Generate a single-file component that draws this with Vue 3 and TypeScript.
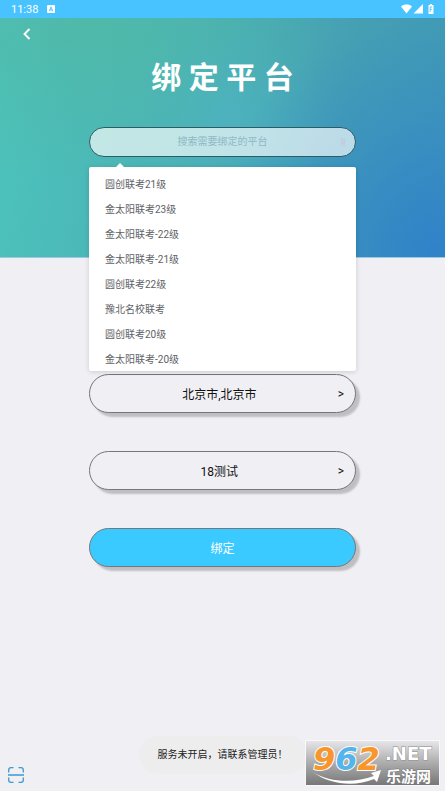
<script setup lang="ts">
import { ref } from 'vue'

const keyword = ref('')
const platforms: string[] = [
  '圆创联考21级',
  '金太阳联考23级',
  '金太阳联考-22级',
  '金太阳联考-21级',
  '圆创联考22级',
  '豫北名校联考',
  '圆创联考20级',
  '金太阳联考-20级',
]
const city = ref('北京市,北京市')
const school = ref('18测试')

function choose(name: string) {
  keyword.value = name
}
</script>

<template>
  <div class="page">
    <div class="status">
      <span class="time">11:38</span>
      <svg class="badge" viewBox="0 0 8 8" aria-hidden="true">
        <rect width="8" height="8" rx="1" fill="#fff" />
        <path d="M2.3 6.2 4 1.9l1.700 4.300M2.900 4.900h2.200" fill="none" stroke="#48c3ff" stroke-width=".9" />
      </svg>
      <svg class="signals" viewBox="0 0 36 12" aria-hidden="true">
        <path d="M1 3.500C4 .900 9 .900 12 3.500L6.500 10.500Z" fill="#fff" />
        <path d="M23 1v9.500h-9.500z" fill="#fff" />
        <path d="M30 1h2v1h1.500v9h-5V2H30z" fill="#fff" />
        <path d="M32.200 4h-2v5M30.200 6.500h1.500" fill="none" stroke="#48c3ff" stroke-width=".9" />
      </svg>
    </div>

    <header class="hero">
      <nav class="nav">
        <button class="back" type="button" aria-label="返回">
          <svg viewBox="0 0 8 12" aria-hidden="true">
            <path d="M6.500 1 1.500 6l5 5" fill="none" stroke="#fff" stroke-width="1.900" />
          </svg>
        </button>
      </nav>
      <h1 class="title">绑 定 平 台</h1>
      <div class="search">
        <input v-model="keyword" class="field" type="text" placeholder="搜索需要绑定的平台" aria-label="搜索需要绑定的平台" />
        <svg class="mark" viewBox="0 0 4 8" aria-hidden="true">
          <path d="M.5.5h3v7h-3zM1 2.500h2M1 4h2M1 5.500h2" fill="none" stroke="#c8bfca" stroke-width=".5" />
        </svg>
        <div class="menu">
          <ul class="options">
            <li v-for="name in platforms" :key="name">
              <button class="option" type="button" @click="choose(name)">{{ name }}</button>
            </li>
          </ul>
        </div>
      </div>
    </header>

    <main class="form">
      <button class="pill" type="button" aria-haspopup="listbox">
        <span class="value">{{ city }}</span><span>&gt;</span>
      </button>
      <button class="pill" type="button" aria-haspopup="listbox">
        <span class="value">{{ school }}</span><span>&gt;</span>
      </button>
      <button class="pill submit" type="button">绑定</button>
    </main>

    <footer class="footer">
      <button class="scan" type="button" aria-label="扫一扫">
        <svg viewBox="0 0 16 16" fill="none" stroke="#3b9bd0" stroke-width="1.300" aria-hidden="true">
          <path d="M.7 5.500V3Q.7.700 3 .700h2.500M10.500.700H13q2.300 0 2.300 2.300v2.500M.7 10.500V13q0 2.300 2.300 2.300h2.500M10.500 15.300H13q2.300 0 2.300-2.300v-2.500M0 8h16" />
        </svg>
      </button>
    </footer>

    <div class="toast" role="status">服务未开启，请联系管理员！</div>

    <svg class="brand" viewBox="0 0 135 46" role="img" aria-label="962.NET 乐游网">
      <defs>
        <linearGradient id="plate" x1="0" y1="0" x2="0" y2="1">
          <stop offset="0" stop-color="#e6e6e8" />
          <stop offset=".5" stop-color="#acacad" />
          <stop offset="1" stop-color="#777778" />
        </linearGradient>
      </defs>
      <rect width="135" height="46" fill="#f8f8fa" />
      <rect x="1" y="1" width="133" height="44" fill="url(#plate)" />
      <path d="M8 32C25 43 50 43 69 36l-3-3 10-3-4 12-3-3C50 47 25 45 8 32Z" fill="#fff" />
      <text class="digits" x="8" y="30"><tspan fill="#f7962c">9</tspan><tspan fill="#55b4ea">6</tspan><tspan fill="#f7962c">2</tspan></text>
      <text class="domain" x="80" y="20">.NET</text>
      <text class="name" x="81" y="42">乐游网</text>
    </svg>
  </div>
</template>

<style>
body {
  margin: 0;
  background: #efeff4;
}
</style>

<style scoped>
.page {
  position: relative;
  display: flex;
  flex-direction: column;
  min-height: 100vh;
  background: #efeff4;
  font-family: Roboto, "Noto Sans CJK SC", sans-serif;
}
button {
  margin: 0;
  padding: 0;
  border: 0;
  background: none;
  font-family: inherit;
}
svg {
  display: block;
}
.status {
  display: flex;
  align-items: center;
  height: 18px;
  padding: 0 9px 0 11px;
  background: #48c3ff;
  color: #fff;
}
.time {
  padding-top: 2px;
  font-size: 11px;
  line-height: 16px;
}
.badge {
  width: 8px;
  height: 8px;
  margin-left: 9px;
}
.signals {
  width: 36px;
  height: 12px;
  margin-left: auto;
}
.hero {
  box-sizing: border-box;
  display: flex;
  flex-direction: column;
  align-items: center;
  height: 240px;
  border-bottom: 1px solid #9cc9e0;
  background:
    radial-gradient(circle at 52% 42%, rgba(80, 182, 202, 0.5), rgba(80, 182, 202, 0.2) 18%, rgba(80, 182, 202, 0) 36%),
    radial-gradient(ellipse at 20% 0%, rgba(80, 184, 165, 0.8), rgba(80, 184, 165, 0) 50%),
    radial-gradient(circle at 100% 100%, rgba(46, 128, 202, 0.95), rgba(50, 136, 200, 0.55) 25%, rgba(60, 148, 190, 0) 48%),
    linear-gradient(100deg, #4dc4bc 0%, #4ab2b6 40%, #459fb3 75%, #4098b6 100%);
}
.nav {
  align-self: stretch;
  display: flex;
  height: 32px;
  padding-left: 17px;
}
.back {
  display: flex;
  align-items: center;
  justify-content: center;
  width: 20px;
  height: 32px;
}
.back svg {
  width: 8px;
  height: 12px;
}
.title {
  margin: 6px 0 0;
  color: #fff;
  font-size: 30px;
  font-weight: 700;
  line-height: 44px;
  white-space: nowrap;
}
.search {
  position: relative;
  width: 60%;
  margin-top: 27px;
}
.field {
  box-sizing: border-box;
  display: block;
  width: 100%;
  height: 30px;
  padding: 0 16px 2px;
  border: 1px solid #2c5c66;
  border-radius: 15px;
  outline: none;
  background: rgba(255, 255, 255, 0.66);
  color: #333;
  font-family: inherit;
  font-size: 10px;
  text-align: center;
}
.field::placeholder {
  color: #8fb9c4;
  opacity: 1;
}
.mark {
  position: absolute;
  top: 11px;
  right: 11px;
  width: 4px;
  height: 8px;
}
.menu {
  position: absolute;
  z-index: 2;
  top: 40px;
  left: 0;
  right: 0;
  border-radius: 2px;
  background: #fff;
  box-shadow: 0 1px 5px rgba(0, 0, 0, 0.15);
}
.menu::before {
  content: "";
  position: absolute;
  top: -4px;
  left: 27px;
  border-right: 4px solid transparent;
  border-bottom: 4px solid #fff;
  border-left: 4px solid transparent;
}
.options {
  max-height: 199px;
  margin: 0;
  padding: 5px 0 0;
  overflow: hidden;
  list-style: none;
}
.option {
  display: block;
  width: 100%;
  height: 25px;
  padding: 0 16px;
  color: #606266;
  font-size: 10px;
  line-height: 25px;
  text-align: left;
}
.form {
  display: flex;
  flex: 1;
  flex-direction: column;
  align-items: center;
  gap: 38px;
  padding-top: 116px;
}
.pill {
  box-sizing: border-box;
  display: flex;
  align-items: center;
  justify-content: center;
  width: 60%;
  height: 39px;
  padding: 0 11px;
  border: 1px solid #77777b;
  border-radius: 20px;
  background: #efeff4;
  box-shadow: 4px 4px 2px rgba(0, 0, 0, 0.2);
  color: #111;
  font-size: 12px;
}
.value {
  flex: 1;
}
.submit {
  background: #3bcaff;
  color: #fff;
}
.footer {
  padding: 0 8px 8px;
}
.scan {
  display: block;
}
.scan svg {
  width: 16px;
  height: 16px;
}
.toast {
  position: absolute;
  bottom: 17px;
  left: 50%;
  transform: translateX(-50%);
  padding: 0 19px;
  border-radius: 19px;
  background: #ededee;
  color: #222;
  font-size: 10px;
  line-height: 38px;
  white-space: nowrap;
}
.brand {
  position: absolute;
  right: 5px;
  bottom: 5px;
  width: 135px;
  height: 46px;
}
.digits {
  font-family: "DejaVu Sans", sans-serif;
  font-size: 32px;
  font-style: italic;
  font-weight: 700;
  paint-order: stroke;
  stroke: #fff;
  stroke-width: 2px;
}
.domain {
  fill: #fff;
  font-family: "DejaVu Sans", sans-serif;
  font-size: 18px;
  font-weight: 700;
  paint-order: stroke;
  stroke: #8c8c8e;
  stroke-width: 1px;
}
.name {
  fill: #fff;
  font-family: "Noto Sans CJK SC", sans-serif;
  font-size: 15px;
  font-weight: 700;
  paint-order: stroke;
  stroke: #777779;
  stroke-width: 1px;
}
</style>
